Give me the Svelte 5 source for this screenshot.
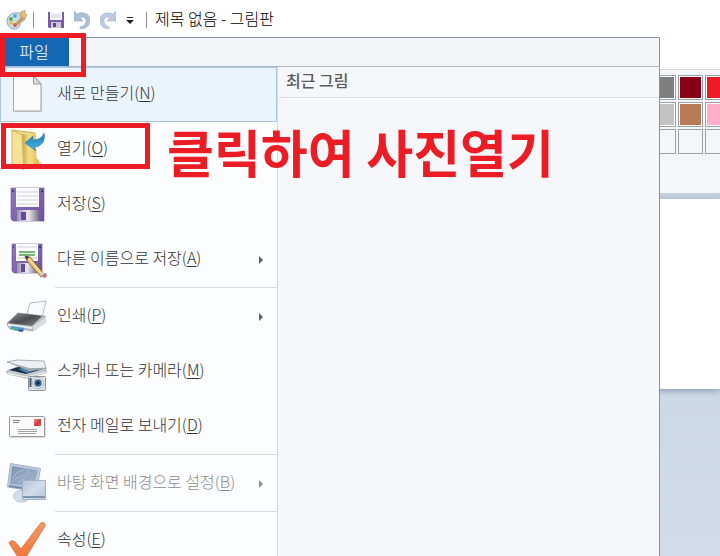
<svelte:head>
  <title>제목 없음 - 그림판</title>
</svelte:head>

<script>
  let active = 'new';

  const items = [
    { id: 'new', label: '새로 만들기', key: 'N' },
    { id: 'open', label: '열기', key: 'O' },
    { id: 'save', label: '저장', key: 'S' },
    { id: 'saveas', label: '다른 이름으로 저장', key: 'A', sub: true, line: true },
    { id: 'print', label: '인쇄', key: 'P', sub: true },
    { id: 'scan', label: '스캐너 또는 카메라', key: 'M' },
    { id: 'mail', label: '전자 메일로 보내기', key: 'D', line: true },
    { id: 'desktop', label: '바탕 화면 배경으로 설정', key: 'B', sub: true, disabled: true, line: true },
    { id: 'props', label: '속성', key: 'E' },
  ];

  // empty colour = unused custom slot
  const swatches = ['#7f7f7f', '#880015', '#ed1c24', '#c3c3c3', '#b97a57', '#ffaec9', '', '', ''];
</script>

<div class="window">
  <header class="titlebar">
    <svg class="logo" width="22" height="20" viewBox="0 0 22 20">
      <path d="M1 11C1 6 6 2 12 3c5 0 8 2 7 6-1 3-5 2-5 5 0 3-2 5-6 5-4 0-7-4-7-8z" fill="#c9dde8" stroke="#8ba9bb" />
      <circle cx="5" cy="9" r="2" fill="#55ad5b" />
      <circle cx="9" cy="6" r="1.8" fill="#4b9fd8" />
      <circle cx="5" cy="13" r="1.8" fill="#e9bd35" />
      <circle cx="9" cy="15" r="2" fill="#d55b46" />
      <path d="M9 14l7-8 3 2-7 7z" fill="#c79b5c" />
      <path d="M14 6l1-4 4-2v3l2 2-3 4z" fill="#e5bd7e" stroke="#b98a4d" stroke-width=".6" />
    </svg>
    <span class="bar"></span>
    <div class="quick">
      <button aria-label="저장">
        <svg width="16" height="16" viewBox="0 0 16 16">
          <path d="M0 0h16v16H1L0 15z" fill="#765ba7" />
          <path d="M2 0h12v8H2z" fill="#f5f5fa" />
          <path d="M3 3h10M3 5h10" stroke="#cfd0dc" />
          <path d="M3 10h10v6H3z" fill="#c9c8d7" />
          <path d="M5 11h3v4H5z" fill="#604594" />
        </svg>
      </button>
      <button aria-label="실행 취소">
        <svg width="16" height="18" viewBox="0 0 16 18">
          <path d="M0 0l3 3c6-3 13 0 13 6 0 6-4 9-10 9v-2c4-1 6-3 6-6 0-4-3-5-6-3l3 3H0z" fill="#adbfd6" stroke="#92a8c4" stroke-width=".6" />
        </svg>
      </button>
      <button aria-label="다시 실행">
        <svg width="16" height="18" viewBox="0 0 16 18">
          <path d="M16 0l-3 3C7 0 0 3 0 9c0 6 4 9 9 9v-2c-3-1-5-3-5-6 0-4 3-5 6-3l-3 3h9z" fill="#bccbdc" stroke="#a1b4cb" stroke-width=".6" />
        </svg>
      </button>
      <button aria-label="빠른 실행 도구 모음 사용자 지정">
        <svg width="8" height="8" viewBox="0 0 8 8">
          <path d="M1 1h6v1H1zM0 4h8L4 8z" fill="#222" />
        </svg>
      </button>
    </div>
    <span class="bar"></span>
    <h1>제목 없음 - 그림판</h1>
  </header>

  <div class="tabs"></div>

  <section class="ribbon">
    <div class="palette">
      {#each swatches as color}
        <button class="swatch" class:empty={!color} style:background-color={color} aria-label="색"></button>
      {/each}
    </div>
  </section>

  <main class="work">
    <div class="paper"></div>
  </main>

  <div class="menu">
    <div class="menu-top">
      <button class="file">파일</button>
    </div>
    <div class="menu-body">
      <nav>
        {#each items as item}
          <button
            class="item"
            class:active={active === item.id}
            disabled={item.disabled}
            on:mouseenter={() => (active = item.id)}
          >
            <svg width="54" height="55" viewBox="0 0 54 55">
              {#if item.id === 'new'}
                <path d="M14 9h20l8 9v27H14z" fill="#bbb" opacity=".6" />
                <path d="M13.5 8.500h20l7.500 8.500v27h-27.500z" fill="#fafafa" stroke="#a5a5a5" />
                <path d="M33.500 8.500v8.500H41z" fill="#dcdcdc" stroke="#999" />
              {:else if item.id === 'open'}
                <path d="M36 37l9 7-7 3H24z" fill="#c9ccd2" />
                <path d="M12 8l23 3 1 27-3 8H20z" fill="#f2da80" stroke="#cfae4e" />
                <path d="M22 12h13l1 26-12 8z" fill="url(#folder)" />
                <path d="M12 8l10 5 2 35-12-6z" fill="#f4e296" stroke="#c9a84c" stroke-width=".8" />
                <path d="M35 36l4 2v8h-5z" fill="#dfc05b" />
                <path d="M25 21l8-7v4c5 0 9-2 11-7 2 8-3 14-10 14l2 4z" fill="url(#arrow)" stroke="#227fb5" stroke-width=".6" />
              {:else if item.id === 'save'}
                <path d="M11 11h33v33H13l-2-2z" fill="url(#disk)" stroke="#69509a" stroke-width=".6" />
                <path d="M16 11h23v19H16z" fill="#fbfbfd" />
                <path d="M17 15h21M17 19h21M17 23h21M17 27h21" stroke="#cfcfda" />
                <path d="M12 13h2v2h-2zM41 13h2v2h-2z" fill="#4c3576" />
                <path d="M17 33h22v11H17z" fill="url(#metal)" />
                <path d="M21 35h5v8h-5z" fill="#66499b" />
              {:else if item.id === 'saveas'}
                <path d="M12 12h30v29H14l-2-2z" fill="url(#disk)" stroke="#69509a" stroke-width=".6" />
                <path d="M16 12h22v17H16z" fill="#fbfbfd" />
                <path d="M17 15h20M17 26h20" stroke="#cfcfda" />
                <path d="M19 20h16M19 23h16" stroke="#48a347" stroke-width="1.400" />
                <path d="M13 14h1v2h-1zM39 14h2v2h-2z" fill="#4c3576" />
                <path d="M17 31h20v10H17z" fill="url(#metal)" />
                <path d="M21 32h4v8h-4z" fill="#66499b" />
                <path d="M25 24l5 1 14 17-3 3-14-16z" fill="#eec56a" stroke="#775728" stroke-width=".8" />
                <path d="M29 27l13 15" stroke="#fff0af" />
                <path d="M25 24l4 1-2 3z" fill="#333" />
                <path d="M40 42l3-3 2 2-3 3z" fill="#c8d5cf" />
                <path d="M42 44l3-3c3 1 2 5-1 5z" fill="#c96d70" />
              {:else if item.id === 'print'}
                <path d="M30 14l16-2-4 17-15-4z" fill="#fafbfc" stroke="#a5a9ad" stroke-width=".8" />
                <path d="M7 34l11-10 27 3 1 6-13 9-25-4z" fill="#b8bbbf" stroke="#8c9095" stroke-width=".6" />
                <path d="M18 24l24 3-10 10-24-3z" fill="url(#dark)" />
                <path d="M33 37l13-9v6L33 42z" fill="#dadcde" />
                <path d="M8 35l24 3v2L8 37z" fill="#eee" />
                <path d="M12 37l13 2-3 4-13-3z" fill="#529fce" />
                <path d="M12 39l6 1-1 2-6-2z" fill="#63ae7c" />
                <path d="M19 40l5 1-2 2-4-1z" fill="#385d91" />
              {:else if item.id === 'scan'}
                <path d="M7 27l10-4 29 1v4l-20 6-19-5z" fill="#c8ccd0" stroke="#7d858d" stroke-width=".6" />
                <path d="M9 26l9-3 25 2-17 5z" fill="#1e3249" />
                <path d="M18 25l9-2 13 2-13 4z" fill="#4d7fae" />
                <path d="M7 18l10-2 27 1 2 7-17 1z" fill="#edf0f2" stroke="#8c9297" stroke-width=".7" />
                <path d="M7 18l22 6 17 1-17 2z" fill="#a3aaaf" />
                <path d="M7 28l19 4 20-5v2l-20 5-19-4z" fill="#f2f3f4" stroke="#8f969d" stroke-width=".4" />
                <rect x="28.500" y="32.500" width="17" height="14" rx="1" fill="#dce1e6" stroke="#8d97a2" />
                <path d="M30.500 34v9" stroke="#4f596a" stroke-width="2" />
                <circle cx="38" cy="39" r="5.500" fill="#f3f5f7" stroke="#a9b3be" />
                <circle cx="38" cy="39" r="3.800" fill="#426990" />
                <circle cx="38" cy="39" r="1.800" fill="#152843" />
              {:else if item.id === 'mail'}
                <rect x="10" y="18" width="36" height="21" rx="1" fill="#ddd" />
                <rect x="9.500" y="17.500" width="35" height="20" rx="1" fill="#fafafa" stroke="#999" />
                <path d="M13 21.500h7M13 23.500h6" stroke="#888" />
                <path d="M18 30.500h19M18 32.500h19M18 34.500h18" stroke="#a2a2a2" />
                <path d="M34 20h7v7h-7z" fill="url(#stamp)" />
              {:else if item.id === 'desktop'}
                <path d="M14 38c1-2 4-4 9-4l4 11c-7 3-15 0-13-7z" fill="#d3dcea" stroke="#b3c1d6" stroke-width=".8" />
                <path d="M10.500 7.500l30 5-4 23L7.500 31z" fill="#c3cede" stroke="#a3b2c8" />
                <path d="M12 10l26 4-4 17-24-3z" fill="url(#screen)" />
                <path d="M13 22c5-9 9-5 14-11M12 26c7-8 12-3 17-13M18 27c6-4 9-8 13-11" fill="none" stroke="#adbfd7" />
                <path d="M9 30l14 2" stroke="#6f8bb2" stroke-width="2" />
                <path d="M22.500 24.500h23v19h-23z" fill="url(#screen2)" stroke="#a3b3ca" />
                <path d="M23 41h22" stroke="#8094b0" stroke-width="2" />
              {:else}
                <path d="M9 30c1-3 5-3 7 0l5 6 19-25c2-3 6-1 5 2L26 44c-3 4-6 4-8 0z" fill="url(#check)" stroke="#d86c35" stroke-width=".8" />
              {/if}
            </svg>
            <span class="label">{item.label}(<u>{item.key}</u>)</span>
            {#if item.sub}
              <svg class="more" width="4" height="8" viewBox="0 0 4 8"><path d="M0 0l4 4-4 4z" fill="currentColor" /></svg>
            {/if}
          </button>
          {#if item.line}
            <hr />
          {/if}
        {/each}
      </nav>
      <section class="recent">
        <h2>최근 그림</h2>
      </section>
    </div>
  </div>

  <div class="mark mark-file"></div>
  <div class="mark mark-open"></div>
  <p class="note">클릭하여 사진열기</p>

  <svg class="defs" width="0" height="0" aria-hidden="true">
    <defs>
      <linearGradient id="folder"><stop stop-color="#c8a544" /><stop offset=".5" stop-color="#f3de8b" /><stop offset="1" stop-color="#e6c860" /></linearGradient>
      <linearGradient id="arrow" x2="0" y2="1"><stop stop-color="#2478ae" /><stop offset="1" stop-color="#45b6e8" /></linearGradient>
      <linearGradient id="disk" x2="1" y2="1"><stop stop-color="#8f78bc" /><stop offset="1" stop-color="#7151a3" /></linearGradient>
      <linearGradient id="metal"><stop stop-color="#9b92b4" /><stop offset=".5" stop-color="#ebebef" /><stop offset="1" stop-color="#77718c" /></linearGradient>
      <linearGradient id="dark" x2="1" y2="1"><stop stop-color="#92969a" /><stop offset=".5" stop-color="#4a4c50" /><stop offset="1" stop-color="#888b8e" /></linearGradient>
      <linearGradient id="stamp" x2="1" y2="1"><stop stop-color="#ed8e88" /><stop offset=".6" stop-color="#cd3a3a" /><stop offset="1" stop-color="#d96c67" /></linearGradient>
      <linearGradient id="screen" x2="1" y2="1"><stop stop-color="#8095b5" /><stop offset="1" stop-color="#a5b6ce" /></linearGradient>
      <linearGradient id="screen2" x2="1" y2="1"><stop stop-color="#b3c3da" /><stop offset=".5" stop-color="#d3ddea" /><stop offset="1" stop-color="#b3c3d9" /></linearGradient>
      <linearGradient id="check" x2="0" y2="1"><stop stop-color="#f29a65" /><stop offset="1" stop-color="#ef7438" /></linearGradient>
    </defs>
  </svg>
</div>

<style>
  :global(body) {
    margin: 0;
  }
  .window {
    position: relative;
    display: flex;
    flex-direction: column;
    height: 100vh;
    overflow: hidden;
    background: #fff;
    color: #333;
    font-family: "Noto Sans CJK KR", sans-serif;
    font-size: 16px;
    font-weight: 300;
    line-height: 24px;
  }
  button {
    margin: 0;
    padding: 0;
    border: 0;
    background: none;
    color: inherit;
    font: inherit;
  }
  svg {
    display: block;
    flex: none;
  }
  .titlebar {
    display: flex;
    align-items: center;
    height: 35px;
    padding: 2px 6px 0;
  }
  .bar {
    width: 1px;
    height: 16px;
    margin-left: 5px;
    background: #8c8c8c;
  }
  .quick {
    display: flex;
    align-items: center;
    gap: 10px;
    margin: 0 12px 0 14px;
  }
  .quick + .bar {
    margin-left: 0;
  }
  h1 {
    margin: 0;
    padding: 0 0 4px 8px;
    color: #000;
    font-size: 16px;
    font-weight: 300;
  }
  .tabs {
    height: 32px;
  }
  .ribbon {
    height: 118px;
    padding: 5px 0 0 calc(100% - 69px);
    border-top: 1px solid #d5dae1;
    border-bottom: 6px solid #c5d0de;
    background: #f4f6f9;
  }
  .palette {
    display: grid;
    grid-template-columns: repeat(3, 25px);
    gap: 2px;
  }
  .swatch {
    height: 25px;
    border: 1px solid #a0a0a4;
    box-shadow: inset 0 0 0 1px #fff;
  }
  .swatch.empty {
    box-shadow: none;
  }
  .work {
    flex: 1;
    background: linear-gradient(#c8d3e3, #d1dbe9);
  }
  .paper {
    height: 190px;
    background: #fff;
    box-shadow: 0 2px 6px #8e9db3;
  }
  .menu {
    position: absolute;
    top: 37px;
    right: 60px;
    bottom: 0;
    left: 0;
    display: flex;
    flex-direction: column;
    border-top: 1px solid #8592a8;
    border-right: 1px solid #8592a8;
    background: #f5f7fa;
  }
  .menu-top {
    padding-left: 5px;
    border-bottom: 1px solid #a9b7cf;
    background: #f4f5f7;
  }
  .file {
    display: block;
    width: 64px;
    height: 28px;
    padding: 0 6px 2px 0;
    background: #1468b3;
    color: #fff;
  }
  .menu-body {
    display: flex;
    flex: 1;
    min-height: 0;
  }
  nav {
    width: 277px;
    overflow: hidden;
    border-right: 1px solid #d6dae0;
    background: #fbfdff;
  }
  .item {
    display: flex;
    align-items: center;
    width: 100%;
    height: 55px;
    text-align: left;
  }
  .item.active {
    background: #ebf3fd;
    box-shadow: inset 0 0 0 1px #adc8e3;
  }
  .item:disabled {
    color: #8c8c8c;
  }
  .label {
    flex: 1;
    padding: 0 0 5px 3px;
    white-space: nowrap;
  }
  u {
    text-underline-offset: 2px;
  }
  .more {
    margin-right: 14px;
    color: #566176;
  }
  .item:disabled .more {
    color: #909090;
  }
  hr {
    height: 1px;
    margin: 0 0 1px 55px;
    border: 0;
    background: #d6dae0;
  }
  .recent {
    flex: 1;
    padding-left: 1px;
  }
  h2 {
    margin: 0;
    padding: 1px 7px 5px;
    border-bottom: 1px solid #d8dce1;
    box-shadow: 0 1px #fff;
    color: #5c5c5c;
    font-size: 16px;
    font-weight: 500;
  }
  .mark {
    position: absolute;
    box-sizing: border-box;
    border: 5px solid #ec1c24;
    pointer-events: none;
  }
  .mark-file {
    top: 33px;
    left: 0;
    width: 86px;
    height: 44px;
  }
  .mark-open {
    top: 123px;
    left: 1px;
    width: 149px;
    height: 46px;
  }
  .note {
    position: absolute;
    top: 121px;
    left: 167px;
    margin: 0;
    color: #ec1c24;
    font-size: 51px;
    font-weight: 700;
    line-height: 60px;
    white-space: nowrap;
    pointer-events: none;
  }
  .defs {
    position: absolute;
  }
</style>
